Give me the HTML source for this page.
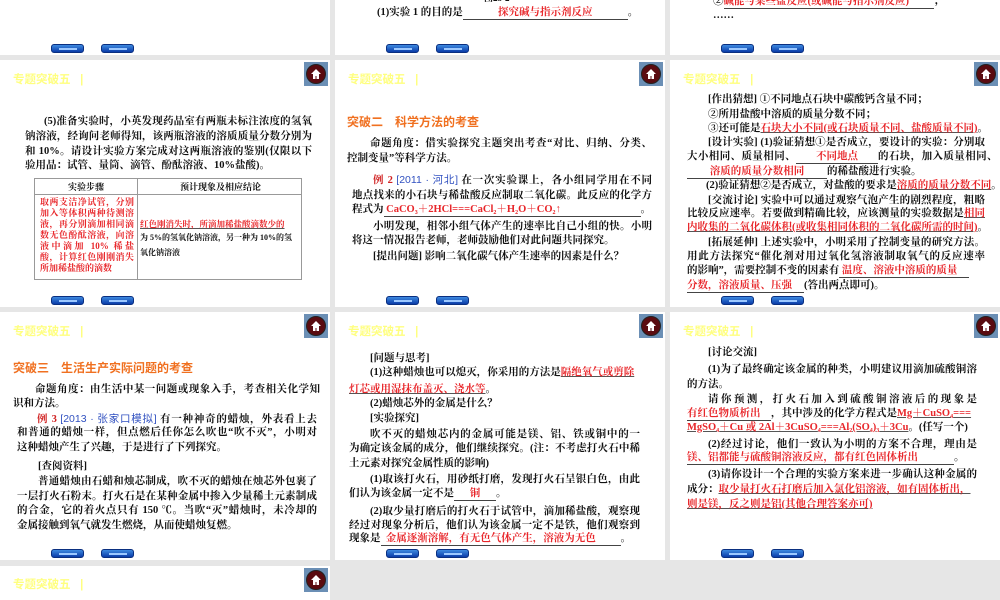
<!DOCTYPE html>
<html><head><meta charset="utf-8">
<style>
*{margin:0;padding:0;box-sizing:border-box}
body{width:1000px;height:600px;background:#e6e6e6;position:relative;overflow:hidden;font-family:"Liberation Serif","Noto Serif CJK SC",serif;font-weight:bold;color:#111}
.p{position:absolute;background:#fff}
.l{position:absolute;font-size:10.5px;line-height:14px;white-space:nowrap;height:14px}
.j{text-align:justify;text-align-last:justify;white-space:normal;overflow:hidden}
.r{color:#e8262a;text-decoration:underline;text-decoration-color:#555}
.u{border-bottom:1px solid #444;display:inline-block;line-height:12px;white-space:nowrap;text-align-last:auto}
sub{vertical-align:baseline;position:relative;top:2px;line-height:0;font-size:6px}
.t{position:absolute;color:#ffff80;font-family:"Liberation Sans","Noto Sans CJK SC",sans-serif;font-size:11.5px;font-weight:bold}
.h{position:absolute;color:#f07020;font-family:"Liberation Sans","Noto Sans CJK SC",sans-serif;font-size:12px;font-weight:bold}
.b{position:absolute;width:33px;height:9px;border-radius:3px;background:linear-gradient(#3d8ae0,#0a3ba8);border:1px solid #0a2f80}
.b::after{content:"";position:absolute;left:7px;top:3px;width:18px;height:2px;background:#9cc8ff}
.hm{position:absolute;width:24px;height:24px;background:#6b8fb5}
.hm i{position:absolute;left:2px;top:2px;width:20px;height:20px;border-radius:50%;background:#5a0b10;border:1px solid #222}
.hm svg{position:absolute;left:6px;top:6px}
.blue{color:#3050c0;font-family:"Liberation Sans","Noto Sans CJK SC",sans-serif;font-weight:normal}
.sm{font-size:9px}
</style></head><body>

<div class="p" style="left:0;top:0;width:330px;height:55px"></div>
<div class="p" style="left:335px;top:0;width:330px;height:55px"></div>
<div class="p" style="left:670px;top:0;width:330px;height:55px"></div>
<div class="p" style="left:0;top:60px;width:330px;height:247px"></div>
<div class="p" style="left:335px;top:60px;width:330px;height:247px"></div>
<div class="p" style="left:670px;top:60px;width:330px;height:247px"></div>
<div class="p" style="left:0;top:312px;width:330px;height:248px"></div>
<div class="p" style="left:335px;top:312px;width:330px;height:248px"></div>
<div class="p" style="left:670px;top:312px;width:330px;height:248px"></div>
<div class="p" style="left:0;top:566px;width:330px;height:34px"></div>

<div class="b" style="left:51px;top:44px"></div><div class="b" style="left:101px;top:44px"></div>
<div class="b" style="left:386px;top:44px"></div><div class="b" style="left:436px;top:44px"></div>
<div class="b" style="left:721px;top:44px"></div><div class="b" style="left:771px;top:44px"></div>
<div class="b" style="left:51px;top:296px"></div><div class="b" style="left:101px;top:296px"></div>
<div class="b" style="left:386px;top:296px"></div><div class="b" style="left:436px;top:296px"></div>
<div class="b" style="left:721px;top:296px"></div><div class="b" style="left:771px;top:296px"></div>
<div class="b" style="left:51px;top:549px"></div><div class="b" style="left:101px;top:549px"></div>
<div class="b" style="left:386px;top:549px"></div><div class="b" style="left:436px;top:549px"></div>
<div class="b" style="left:721px;top:549px"></div><div class="b" style="left:771px;top:549px"></div>

<div class="t" style="left:13px;top:71px">专题突破五 &nbsp;&nbsp;|</div>
<div class="t" style="left:348px;top:71px">专题突破五 &nbsp;&nbsp;|</div>
<div class="t" style="left:683px;top:71px">专题突破五 &nbsp;&nbsp;|</div>
<div class="t" style="left:13px;top:323px">专题突破五 &nbsp;&nbsp;|</div>
<div class="t" style="left:348px;top:323px">专题突破五 &nbsp;&nbsp;|</div>
<div class="t" style="left:683px;top:323px">专题突破五 &nbsp;&nbsp;|</div>
<div class="t" style="left:13px;top:576px">专题突破五 &nbsp;&nbsp;|</div>

<div class="hm" style="left:304px;top:62px"><i></i><svg width="12" height="12" viewBox="0 0 12 12"><path d="M6 1L1 6h2v5h2.5V8h1v3H9V6h2z" fill="#fff"/></svg></div>
<div class="hm" style="left:639px;top:62px"><i></i><svg width="12" height="12" viewBox="0 0 12 12"><path d="M6 1L1 6h2v5h2.5V8h1v3H9V6h2z" fill="#fff"/></svg></div>
<div class="hm" style="left:974px;top:62px"><i></i><svg width="12" height="12" viewBox="0 0 12 12"><path d="M6 1L1 6h2v5h2.5V8h1v3H9V6h2z" fill="#fff"/></svg></div>
<div class="hm" style="left:304px;top:314px"><i></i><svg width="12" height="12" viewBox="0 0 12 12"><path d="M6 1L1 6h2v5h2.5V8h1v3H9V6h2z" fill="#fff"/></svg></div>
<div class="hm" style="left:639px;top:314px"><i></i><svg width="12" height="12" viewBox="0 0 12 12"><path d="M6 1L1 6h2v5h2.5V8h1v3H9V6h2z" fill="#fff"/></svg></div>
<div class="hm" style="left:974px;top:314px"><i></i><svg width="12" height="12" viewBox="0 0 12 12"><path d="M6 1L1 6h2v5h2.5V8h1v3H9V6h2z" fill="#fff"/></svg></div>
<div class="hm" style="left:304px;top:568px"><i></i><svg width="12" height="12" viewBox="0 0 12 12"><path d="M6 1L1 6h2v5h2.5V8h1v3H9V6h2z" fill="#fff"/></svg></div>

<div class="l sm" style="left:484px;top:-9px">图23-2</div>
<div class="l" style="left:377px;top:6px">(1)实验 1 的目的是<span class="u" style="width:165px;text-align:center;color:#e8262a">探究碱与指示剂反应</span>。</div>
<div class="l" style="left:713px;top:-5px">②<span class="u" style="width:210px;color:#e8262a">碱能与某些盐反应(或碱能与指示剂反应)</span>；</div>
<div class="l" style="left:713px;top:9px">……</div>

<div class="l j" style="left:44px;top:115px;width:268px">(5)准备实验时，小英发现药品室有两瓶未标注浓度的氢氧化</div>
<div class="l j" style="left:25px;top:130px;width:287px">钠溶液，经询问老师得知，该两瓶溶液的溶质质量分数分别为 5%</div>
<div class="l j" style="left:25px;top:145px;width:287px">和 10%。请设计实验方案完成对这两瓶溶液的鉴别(仅限以下实</div>
<div class="l" style="left:25px;top:159px">验用品：试管、量筒、滴管、酚酞溶液、10%盐酸)。</div>
<div style="position:absolute;left:34px;top:178px;width:268px;height:102px;border:1px solid #999"></div>
<div style="position:absolute;left:34px;top:194px;width:268px;height:1px;background:#999"></div>
<div style="position:absolute;left:137px;top:178px;width:1px;height:102px;background:#999"></div>
<div class="l" style="left:68px;top:180px;font-size:9px">实验步骤</div>
<div class="l" style="left:180px;top:180px;font-size:9px">预计现象及相应结论</div>
<div style="position:absolute;left:40px;top:197px;width:94px;font-size:9px;line-height:11px;color:#e8262a;text-align:justify">取两支洁净试管，分别加入等体积两种待测溶液，再分别滴加相同滴数无色酚酞溶液，向溶液中滴加 10% 稀盐酸，计算红色刚刚消失所加稀盐酸的滴数</div>
<div class="l r" style="left:140px;top:217px;font-size:8.5px">红色刚消失时，所滴加稀盐酸滴数少的</div>
<div class="l" style="left:140px;top:231px;font-size:8px">为 5%的氢氧化钠溶液，另一种为 10%的氢</div>
<div class="l" style="left:140px;top:246px;font-size:8px">氧化钠溶液</div>

<div class="h" style="left:347px;top:113px">突破二　科学方法的考查</div>
<div class="l j" style="left:370px;top:137px;width:282px">命题角度：借实验探究主题突出考查“对比、归纳、分类、</div>
<div class="l" style="left:347px;top:152px">控制变量”等科学方法。</div>
<div class="l j" style="left:373px;top:173px;width:279px"><span style="color:#d02020">例 2</span> <span class="blue">[2011 · 河北]</span> 在一次实验课上，各小组同学用在不同</div>
<div class="l j" style="left:352px;top:189px;width:300px">地点找来的小石块与稀盐酸反应制取二氧化碳。此反应的化学方</div>
<div class="l" style="left:352px;top:203px">程式为<span class="u" style="width:257px;color:#e8262a">&nbsp;CaCO<sub>3</sub>＋2HCl===CaCl<sub>2</sub>＋H<sub>2</sub>O＋CO<sub>2</sub>↑</span>。</div>
<div class="l j" style="left:373px;top:220px;width:279px">小明发现，相邻小组气体产生的速率比自己小组的快。小明</div>
<div class="l" style="left:352px;top:234px">将这一情况报告老师，老师鼓励他们对此问题共同探究。</div>
<div class="l" style="left:373px;top:250px">[提出问题] 影响二氧化碳气体产生速率的因素是什么？</div>

<div class="l" style="left:708px;top:93px">[作出猜想] ①不同地点石块中碳酸钙含量不同；</div>
<div class="l" style="left:708px;top:108px">②所用盐酸中溶质的质量分数不同；</div>
<div class="l" style="left:708px;top:122px">③还可能是<span class="r">石块大小不同(或石块质量不同、盐酸质量不同)</span>。</div>
<div class="l j" style="left:708px;top:136px;width:277px">[设计实验] (1)验证猜想①是否成立，要设计的实验：分别取</div>
<div class="l" style="left:687px;top:150px;letter-spacing:0.4px">大小相同、质量相同、<span class="u" style="width:82px;text-align:center;color:#e8262a;letter-spacing:0">不同地点</span>的石块，加入质量相同、</div>
<div class="l" style="left:687px;top:165px"><span class="u" style="width:140px;text-align:center;color:#e8262a">溶质的质量分数相同</span>的稀盐酸进行实验。</div>
<div class="l" style="left:706px;top:179px">(2)验证猜想②是否成立，对盐酸的要求是<span class="r">溶质的质量分数不同</span>。</div>
<div class="l j" style="left:708px;top:194px;width:277px">[交流讨论] 实验中可以通过观察气泡产生的剧烈程度，粗略地</div>
<div class="l j" style="left:687px;top:207px;width:298px">比较反应速率。若要做到精确比较，应该测量的实验数据是<span class="r">相同时间</span></div>
<div class="l" style="left:687px;top:221px"><span class="r">内收集的二氧化碳体积(或收集相同体积的二氧化碳所需的时间)</span>。</div>
<div class="l j" style="left:708px;top:236px;width:277px">[拓展延伸] 上述实验中，小明采用了控制变量的研究方法。</div>
<div class="l j" style="left:687px;top:250px;width:298px">用此方法探究“催化剂对用过氧化氢溶液制取氧气的反应速率</div>
<div class="l" style="left:687px;top:264px">的影响”，需要控制不变的因素有<span class="u" style="width:130px;color:#e8262a">&nbsp;温度、溶液中溶质的质量</span></div>
<div class="l" style="left:687px;top:279px"><span class="u" style="width:117px;color:#e8262a">分数，溶液质量、压强</span>(答出两点即可)。</div>

<div class="h" style="left:13px;top:359px">突破三　生活生产实际问题的考查</div>
<div class="l j" style="left:35px;top:383px;width:285px">命题角度：由生活中某一问题或现象入手，考查相关化学知</div>
<div class="l" style="left:13px;top:397px">识和方法。</div>
<div class="l j" style="left:37px;top:412px;width:280px"><span style="color:#d02020">例 3</span> <span class="blue">[2013 · 张家口模拟]</span> 有一种神奇的蜡烛，外表看上去</div>
<div class="l j" style="left:17px;top:426px;width:300px">和普通的蜡烛一样，但点燃后任你怎么吹也“吹不灭”，小明对</div>
<div class="l" style="left:17px;top:441px">这种蜡烛产生了兴趣，于是进行了下列探究。</div>
<div class="l" style="left:38px;top:460px">[查阅资料]</div>
<div class="l j" style="left:38px;top:475px;width:279px">普通蜡烛由石蜡和烛芯制成，吹不灭的蜡烛在烛芯外包裹了</div>
<div class="l j" style="left:17px;top:490px;width:300px">一层打火石粉末。打火石是在某种金属中掺入少量稀土元素制成</div>
<div class="l j" style="left:17px;top:504px;width:300px">的合金，它的着火点只有 150 ℃。当吹“灭”蜡烛时，未冷却的</div>
<div class="l" style="left:17px;top:519px">金属接触到氧气就发生燃烧，从而使蜡烛复燃。</div>

<div class="l" style="left:370px;top:352px">[问题与思考]</div>
<div class="l" style="left:370px;top:366px">(1)这种蜡烛也可以熄灭，你采用的方法是<span class="r">隔绝氧气或剪除</span></div>
<div class="l" style="left:349px;top:383px"><span class="r">灯芯或用湿抹布盖灭、浇水等</span>。</div>
<div class="l" style="left:370px;top:397px">(2)蜡烛芯外的金属是什么？</div>
<div class="l" style="left:370px;top:412px">[实验探究]</div>
<div class="l j" style="left:370px;top:428px;width:270px">吹不灭的蜡烛芯内的金属可能是镁、铝、铁或铜中的一种，</div>
<div class="l j" style="left:349px;top:442px;width:291px">为确定该金属的成分，他们继续探究。(注：不考虑打火石中稀</div>
<div class="l" style="left:349px;top:457px">土元素对探究金属性质的影响)</div>
<div class="l j" style="left:370px;top:473px;width:270px">(1)取该打火石，用砂纸打磨，发现打火石呈银白色，由此他</div>
<div class="l" style="left:349px;top:487px">们认为该金属一定不是<span class="u" style="width:42px;text-align:center;color:#e8262a">铜</span>。</div>
<div class="l j" style="left:370px;top:505px;width:270px">(2)取少量打磨后的打火石于试管中，滴加稀盐酸，观察现象。</div>
<div class="l j" style="left:349px;top:519px;width:291px">经过对现象分析后，他们认为该金属一定不是铁，他们观察到的</div>
<div class="l" style="left:349px;top:532px">现象是<span class="u" style="width:240px;color:#e8262a">&nbsp;&nbsp;金属逐渐溶解，有无色气体产生，溶液为无色</span>。</div>

<div class="l" style="left:708px;top:346px">[讨论交流]</div>
<div class="l j" style="left:708px;top:363px;width:269px">(1)为了最终确定该金属的种类，小明建议用滴加硫酸铜溶液</div>
<div class="l" style="left:687px;top:378px">的方法。</div>
<div class="l j" style="left:708px;top:393px;width:269px">请你预测，打火石加入到硫酸铜溶液后的现象是</div>
<div class="l" style="left:687px;top:407px"><span class="u" style="width:84px;color:#e8262a">有红色物质析出</span>，其中涉及的化学方程式是<span class="r">Mg＋CuSO<sub>4</sub>===</span></div>
<div class="l" style="left:687px;top:421px"><span class="r">MgSO<sub>4</sub>＋Cu 或 2Al＋3CuSO<sub>4</sub>===Al<sub>2</sub>(SO<sub>4</sub>)<sub>3</sub>＋3Cu</span>。(任写一个)</div>
<div class="l j" style="left:708px;top:438px;width:269px">(2)经过讨论，他们一致认为小明的方案不合理，理由是</div>
<div class="l" style="left:687px;top:451px"><span class="u" style="width:267px;color:#e8262a">镁、铝都能与硫酸铜溶液反应，都有红色固体析出</span>。</div>
<div class="l j" style="left:708px;top:468px;width:269px">(3)请你设计一个合理的实验方案来进一步确认这种金属的</div>
<div class="l" style="left:687px;top:483px">成分：<span class="r">取少量打火石打磨后加入氯化铝溶液，如有固体析出，</span></div>
<div class="l" style="left:687px;top:498px"><span class="r">则是镁，反之则是铝(其他合理答案亦可)</span></div>

</body></html>
